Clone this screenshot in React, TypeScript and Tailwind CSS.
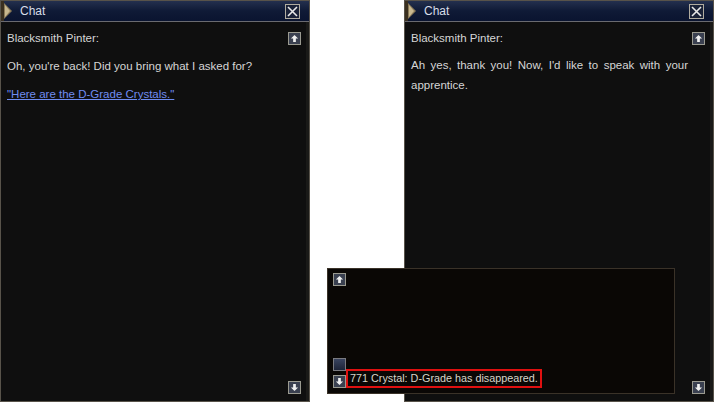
import React from "react";

const font = { fontFamily: '"Liberation Sans", Arial, sans-serif' };

const ArrowButton = ({ dir }: { dir: "up" | "down" }) => (
  <div className="w-[13px] h-[13px] border border-[#9a9a90] bg-[#3a4050] flex items-center justify-center">
    <svg width="9" height="9" viewBox="0 0 10 10">
      {dir === "up" ? (
        <path d="M5 1 L9 5 L6.5 5 L6.5 9 L3.5 9 L3.5 5 L1 5 Z" fill="#f0f0f0" />
      ) : (
        <path d="M5 9 L9 5 L6.5 5 L6.5 1 L3.5 1 L3.5 5 L1 5 Z" fill="#f0f0f0" />
      )}
    </svg>
  </div>
);

const TitleBar = () => (
  <div className="h-[21px] flex items-center border-b border-[#6a6a70] bg-gradient-to-b from-[#24304e] via-[#0f1a36] to-[#0a1430]">
    <svg width="14" height="20" viewBox="0 0 14 20" className="shrink-0">
      <rect x="0" y="0" width="3" height="20" fill="#3a3020" />
      <path d="M3 2 L11 10 L3 18 Z" fill="#8a7a58" />
      <path d="M4 4 L9 10 L4 16 Z" fill="#c8b890" />
    </svg>
    <span className="ml-[5px] text-[12px] text-[#d8dde8]">Chat</span>
    <div className="ml-auto mr-[9px] w-[15px] h-[15px] border border-[#b0aca0] bg-[#1a2238] flex items-center justify-center">
      <svg width="11" height="11" viewBox="0 0 11 11">
        <path d="M1 1 L10 10 M10 1 L1 10" stroke="#e8e8e8" strokeWidth="1.6" />
      </svg>
    </div>
  </div>
);

const ChatPanel = ({ children }: { children: React.ReactNode }) => (
  <div className="w-[310px] h-[402px] flex flex-col border border-[#58534a] bg-[#0f0f0f]">
    <TitleBar />
    <div className="flex-1 flex border-r-[3px] border-[#1a1a18] pl-[6px] pr-[5px] pt-[8px] pb-[7px]">
      <div className="flex-1 text-[11.5px] text-[#d6d6d6]">{children}</div>
      <div className="flex flex-col justify-between pt-[2px]">
        <ArrowButton dir="up" />
        <ArrowButton dir="down" />
      </div>
    </div>
  </div>
);

export default function App() {
  return (
    <div className="relative w-[715px] h-[402px] bg-white overflow-hidden" style={font}>
      <div className="flex gap-[94px]">
        <ChatPanel>
          <p className="leading-[16px]">Blacksmith Pinter:</p>
          <p className="mt-[12px] leading-[16px]">
            Oh, you're back! Did you bring what I asked for?
          </p>
          <p className="mt-[12px] leading-[16px]">
            <span className="text-[#6f8cf0] underline">"Here are the D-Grade Crystals."</span>
          </p>
        </ChatPanel>
        <ChatPanel>
          <p className="leading-[16px]">Blacksmith Pinter:</p>
          <p className="mt-[9px] leading-[20px] text-justify pr-[4px]">
            Ah yes, thank you! Now, I'd like to speak with your apprentice.
          </p>
        </ChatPanel>
      </div>

      {/* system message window overlapping the right chat */}
      <div className="absolute left-[327px] top-[268px] w-[348px] h-[126px] border border-[#3a3228] bg-[#0a0705] flex">
        <div className="flex flex-col pl-[5px] pt-[4px] pb-[5px]">
          <ArrowButton dir="up" />
          <div className="flex-1" />
          <div className="w-[13px] h-[13px] border border-[#7a7a80] bg-gradient-to-b from-[#3a4460] to-[#1e2438]" />
          <div className="mt-[4px]">
            <ArrowButton dir="down" />
          </div>
        </div>
        <div className="flex flex-col justify-end pb-[5px]">
          <div className="border-2 border-[#e01010] px-[2px] h-[19px] flex items-center text-[10.8px] text-[#d8d4c8] whitespace-nowrap">
            771 Crystal: D-Grade has disappeared.
          </div>
        </div>
      </div>
    </div>
  );
}
